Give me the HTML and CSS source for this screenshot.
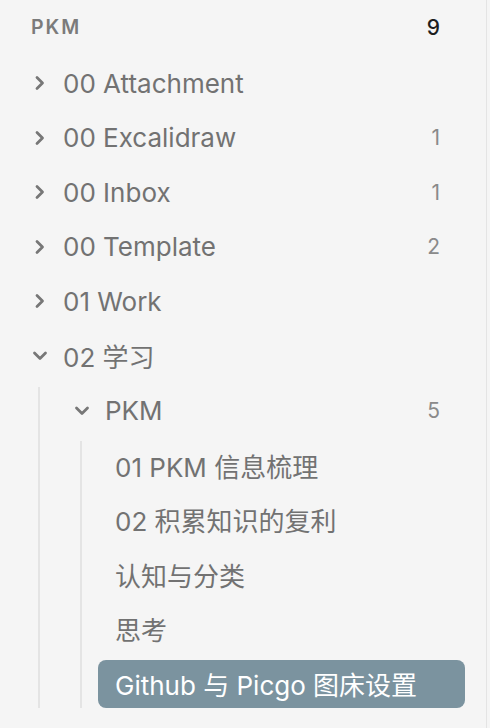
FILE: index.html
```html
<!DOCTYPE html>
<html lang="zh">
<head>
<meta charset="utf-8">
<link rel="stylesheet" href="styles.css">
</head>
<body>
<div class="pane">
  <div class="vault">
    <span class="vault-name">PKM</span>
    <span class="vault-count">9</span>
  </div>
  <div class="tree">
    <div class="row">
      <svg class="chev" viewBox="0 0 18 18"><path d="M6 3.5 L11.5 9 L6 14.5"/></svg>
      <span class="label">00 Attachment</span>
    </div>
    <div class="row">
      <svg class="chev" viewBox="0 0 18 18"><path d="M6 3.5 L11.5 9 L6 14.5"/></svg>
      <span class="label">00 Excalidraw</span><span class="count">1</span>
    </div>
    <div class="row">
      <svg class="chev" viewBox="0 0 18 18"><path d="M6 3.5 L11.5 9 L6 14.5"/></svg>
      <span class="label">00 Inbox</span><span class="count">1</span>
    </div>
    <div class="row">
      <svg class="chev" viewBox="0 0 18 18"><path d="M6 3.5 L11.5 9 L6 14.5"/></svg>
      <span class="label">00 Template</span><span class="count">2</span>
    </div>
    <div class="row">
      <svg class="chev" viewBox="0 0 18 18"><path d="M6 3.5 L11.5 9 L6 14.5"/></svg>
      <span class="label">01 Work</span>
    </div>
    <div class="row">
      <svg class="chev" viewBox="0 0 18 18"><path d="M3.5 6 L9 11.5 L14.5 6"/></svg>
      <span class="label">02 学习</span>
    </div>
    <div class="children">
      <div class="row">
        <svg class="chev" viewBox="0 0 18 18"><path d="M3.5 6 L9 11.5 L14.5 6"/></svg>
        <span class="label">PKM</span><span class="count">5</span>
      </div>
      <div class="children">
        <div class="row file"><span class="label">01 PKM 信息梳理</span></div>
        <div class="row file"><span class="label">02 积累知识的复利</span></div>
        <div class="row file"><span class="label">认知与分类</span></div>
        <div class="row file"><span class="label">思考</span></div>
        <div class="row file active"><span class="label">Github 与 Picgo 图床设置</span></div>
      </div>
    </div>
  </div>
</div>
</body>
</html>
```

FILE: styles.css
```css
html, body {
  margin: 0;
  padding: 0;
  background: #f5f5f5;
}
body {
  font-family: Inter, "Noto Sans CJK SC", "Noto Sans", sans-serif;
  width: 490px;
  height: 728px;
  overflow: hidden;
}
.pane {
  width: 486px;
  height: 728px;
  border-right: 1px solid #e4e4e4;
  box-sizing: content-box;
}
.vault {
  display: flex;
  align-items: center;
  justify-content: space-between;
  height: 38px;
  padding: 8px 46px 0 31px;
}
.vault-name {
  font-size: 19.5px;
  font-weight: 600;
  letter-spacing: 2px;
  color: #7b7b7b;
}
.vault-count {
  font-size: 21px;
  font-weight: 500;
  color: #1e1e1e;
}
.tree {
  padding: 13px 21px 0 24px;
}
.row {
  display: flex;
  align-items: center;
  height: 48px;
  margin-bottom: 6.6px;
  padding-left: 7px;
  padding-right: 25px;
  color: #727272;
  font-size: 26px;
  border-radius: 8px;
}
.row.file {
  padding-left: 17px;
}
.chev {
  width: 18px;
  height: 18px;
  flex: none;
  margin-right: 14px;
  fill: none;
  stroke: #777;
  stroke-width: 2.8;
  stroke-linecap: round;
  stroke-linejoin: round;
}
.label {
  flex: 1;
  white-space: nowrap;
}
.count {
  font-size: 21px;
  color: #8a8a8a;
}
.children {
  margin-left: 14px;
  border-left: 2px solid #e4e4e4;
  padding-left: 26px;
}
.children .children {
  padding-left: 16px;
}
.children > .row:last-child {
  margin-bottom: 0;
}
.row.active {
  background: #7b939f;
  color: #ffffff;
}
```
